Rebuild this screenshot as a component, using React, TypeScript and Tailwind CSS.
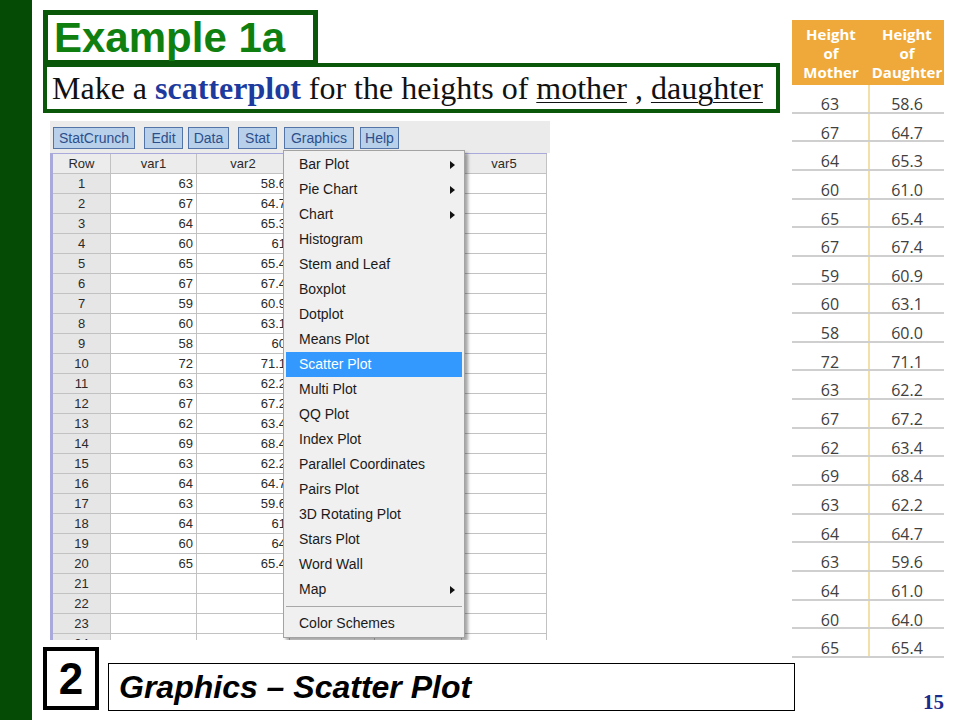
import React from "react";

const var1 = [63, 67, 64, 60, 65, 67, 59, 60, 58, 72, 63, 67, 62, 69, 63, 64, 63, 64, 60, 65];
const var2 = ["58.6", "64.7", "65.3", "61", "65.4", "67.4", "60.9", "63.1", "60", "71.1", "62.2", "67.2", "63.4", "68.4", "62.2", "64.7", "59.6", "61", "64", "65.4"];
const right: [string, string][] = [
  ["63", "58.6"], ["67", "64.7"], ["64", "65.3"], ["60", "61.0"], ["65", "65.4"],
  ["67", "67.4"], ["59", "60.9"], ["60", "63.1"], ["58", "60.0"], ["72", "71.1"],
  ["63", "62.2"], ["67", "67.2"], ["62", "63.4"], ["69", "68.4"], ["63", "62.2"],
  ["64", "64.7"], ["63", "59.6"], ["64", "61.0"], ["60", "64.0"], ["65", "65.4"],
];

const menu: [string, boolean][] = [
  ["Bar Plot", true], ["Pie Chart", true], ["Chart", true], ["Histogram", false],
  ["Stem and Leaf", false], ["Boxplot", false], ["Dotplot", false], ["Means Plot", false],
  ["Scatter Plot", false], ["Multi Plot", false], ["QQ Plot", false], ["Index Plot", false],
  ["Parallel Coordinates", false], ["Pairs Plot", false], ["3D Rotating Plot", false],
  ["Stars Plot", false], ["Word Wall", false], ["Map", true],
];

function Arrow() {
  return (
    <svg width="5" height="8" viewBox="0 0 5 8" className="ml-auto mr-[7px]">
      <path d="M0 0 L5 4 L0 8Z" fill="#111" />
    </svg>
  );
}

function Btn({ label, w, ml }: { label: string; w: string; ml: string }) {
  return (
    <div className={`${w} ${ml} h-[22px] flex items-center justify-center bg-[#b8d0ea] border border-[#5274a6] text-[14px] text-[#2c4f8c] leading-none`}>
      {label}
    </div>
  );
}

export default function App() {
  const rows = Array.from({ length: 24 }, (_, i) => i);
  return (
    <div className="w-[960px] h-[720px] flex bg-white overflow-hidden relative">
      <div className="w-[32px] h-full bg-[#054a05] shrink-0" />

      {/* left column */}
      <div className="w-[760px] shrink-0 flex flex-col">
        <div className="mt-[10px] ml-[11px] w-[275px] h-[53px] border-[5px] border-b-[3px] border-[#0a570a] flex items-center pl-[6px]">
          <span className="font-['Liberation_Sans',Arial,sans-serif] font-bold text-[42px] leading-none text-[#0f800f]">
            Example 1a
          </span>
        </div>
        <div className="ml-[11px] w-[737px] h-[50px] border-[4px] border-[#0a570a] flex items-center pl-[5px]">
          <span className="font-['Liberation_Serif',serif] text-[32px] leading-none text-[#111] whitespace-nowrap">
            Make a <b className="text-[#1d3b9e]">scatterplot</b> for the heights of <span className="underline decoration-1 underline-offset-[3px]">mother</span> , <span className="underline decoration-1 underline-offset-[3px]">daughter</span>
          </span>
        </div>

        {/* StatCrunch screenshot */}
        <div className="mt-[8px] ml-[18px] w-[500px] h-[519px] relative overflow-hidden bg-white font-['Liberation_Sans',Arial,sans-serif]">
          <div className="h-[32px] bg-[#ebebeb] flex items-start pt-[6px]">
            <Btn label="StatCrunch" w="w-[82px]" ml="ml-[3px]" />
            <Btn label="Edit" w="w-[39px]" ml="ml-[9px]" />
            <Btn label="Data" w="w-[41px]" ml="ml-[5px]" />
            <Btn label="Stat" w="w-[39px]" ml="ml-[9px]" />
            <Btn label="Graphics" w="w-[70px]" ml="ml-[7px]" />
            <Btn label="Help" w="w-[39px]" ml="ml-[6px]" />
          </div>
          <div className="flex">
            <div className="w-[497px] border-l-[3px] border-t border-[#a9a9dc]">
              <div className="grid grid-cols-[58px_86px_93px_85px_87px_85px] text-[13px] text-[#2a2a2a]">
                {["Row", "var1", "var2", "var3", "var4", "var5"].map((h) => (
                  <div key={h} className="h-[20px] bg-[#ececec] border-r border-b border-[#c2c2c2] flex items-center justify-center">
                    {h}
                  </div>
                ))}
                {rows.map((i) => (
                  <React.Fragment key={i}>
                    <div className="h-[20px] bg-[#e6e6e6] border-r border-b border-[#c2c2c2] flex items-center justify-center">
                      {i + 1}
                    </div>
                    <div className="h-[20px] border-r border-b border-[#c2c2c2] flex items-center justify-end pr-[3px]">
                      {i < 20 ? var1[i] : ""}
                    </div>
                    <div className="h-[20px] border-r border-b border-[#c2c2c2] flex items-center justify-end pr-[3px]">
                      {i < 20 ? var2[i] : ""}
                    </div>
                    <div className="h-[20px] border-r border-b border-[#c2c2c2]" />
                    <div className="h-[20px] border-r border-b border-[#c2c2c2]" />
                    <div className="h-[20px] border-r border-b border-[#c2c2c2]" />
                  </React.Fragment>
                ))}
              </div>
            </div>
          </div>

          {/* Graphics menu */}
          <div className="absolute left-[233px] top-[29px] w-[182px] h-[488px] bg-[#f0f0f0] border border-[#a3a3a3] shadow-[3px_3px_3px_rgba(0,0,0,0.35)] pt-[1px] text-[14px] text-[#1a1a1a]">
            {menu.map(([label, sub]) => {
              const active = label === "Scatter Plot";
              return (
                <div
                  key={label}
                  className={`h-[25px] mx-[2px] flex items-center pl-[13px] ${active ? "bg-[#3399ff] text-white" : ""}`}
                >
                  <span>{label}</span>
                  {sub && <Arrow />}
                </div>
              );
            })}
            <div className="h-[9px] mx-[2px] flex items-center">
              <div className="w-full h-[1px] bg-[#a8a8a8]" />
            </div>
            <div className="h-[25px] mx-[2px] flex items-center pl-[13px]">Color Schemes</div>
          </div>
        </div>

        {/* bottom */}
        <div className="flex items-start mt-[7px]">
          <div className="ml-[11px] w-[56px] h-[63px] border-[4px] border-black flex items-center justify-center shrink-0">
            <span className="font-['Liberation_Sans',Arial,sans-serif] font-bold text-[44px] leading-none text-black">2</span>
          </div>
          <div className="ml-[9px] mt-[16px] w-[687px] h-[48px] border border-black flex items-center pl-[10px] shrink-0">
            <span className="font-['Liberation_Sans',Arial,sans-serif] font-bold italic text-[32px] leading-none text-black whitespace-nowrap">
              Graphics – Scatter Plot
            </span>
          </div>
        </div>
      </div>

      {/* right column */}
      <div className="flex-1 flex flex-col">
        <div className="mt-[20px] w-[152px] font-['Open_Sans',sans-serif]">
          <div className="h-[65px] bg-[#efa93a] flex text-white font-bold text-[15px] leading-[19px] pt-[2px]">
            <div className="w-[78px] flex items-center justify-center text-center">
              Height<br />of<br />Mother
            </div>
            <div className="w-[74px] flex items-center justify-center text-center">
              Height<br />of<br />Daughter
            </div>
          </div>
          {right.map(([a, b], i) => (
            <div key={i} className="h-[28.65px] flex border-b-2 border-[#cfcfcf] text-[16px] leading-[16px] text-[#404040]">
              <div className="w-[78px] border-r-2 border-[#f3dfa8] flex justify-center pt-[11px]">{a}</div>
              <div className="w-[74px] flex justify-center pt-[11px]">{b}</div>
            </div>
          ))}
        </div>
        <div className="flex justify-end pr-[16px] mt-[32px]">
          <span className="font-['Liberation_Serif',serif] font-bold text-[21px] leading-[24px] text-[#1b2b8c]">15</span>
        </div>
      </div>
    </div>
  );
}
